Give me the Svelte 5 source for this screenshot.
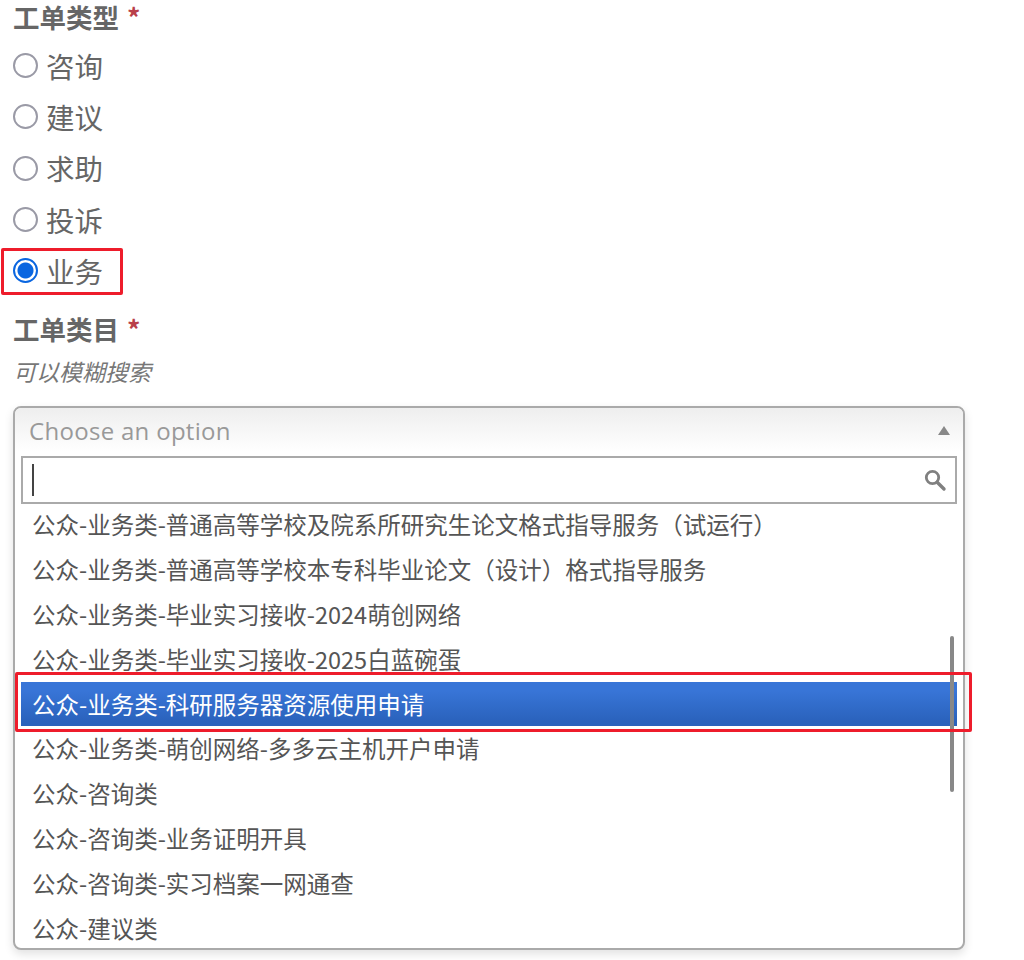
<script>
  const radios = [
    { label: '咨询', checked: false },
    { label: '建议', checked: false },
    { label: '求助', checked: false },
    { label: '投诉', checked: false },
    { label: '业务', checked: true }
  ];
  const options = [
    '公众-业务类-普通高等学校及院系所研究生论文格式指导服务（试运行）',
    '公众-业务类-普通高等学校本专科毕业论文（设计）格式指导服务',
    '公众-业务类-毕业实习接收-2024萌创网络',
    '公众-业务类-毕业实习接收-2025白蓝碗蛋',
    '公众-业务类-科研服务器资源使用申请',
    '公众-业务类-萌创网络-多多云主机开户申请',
    '公众-咨询类',
    '公众-咨询类-业务证明开具',
    '公众-咨询类-实习档案一网通查',
    '公众-建议类'
  ];
  const selected = 4;
</script>

<div class="page">
  <div class="label">工单类型 <span class="req">*</span></div>
  <div class="radios">
    {#each radios as r}
      <div class="radio-row" class:marked={r.checked}>
        <span class="radio" class:on={r.checked}></span>
        <span class="radio-text">{r.label}</span>
      </div>
    {/each}
  </div>

  <div class="label second">工单类目 <span class="req">*</span></div>
  <div class="hint">可以模糊搜索</div>

  <div class="select">
    <div class="head">
      <span class="placeholder">Choose an option</span>
      <span class="arrow"></span>
    </div>
    <div class="drop">
      <div class="search">
        <span class="caret"></span>
        <svg class="glass" width="24" height="24" viewBox="0 0 24 24" aria-hidden="true">
          <circle cx="9.5" cy="9.5" r="6.2" fill="none" stroke="#808080" stroke-width="2.8"/>
          <path d="M14.2 14.2 L21 21" stroke="#808080" stroke-width="3.4" stroke-linecap="round"/>
        </svg>
      </div>
      <div class="list">
        {#each options as o, i}
          <div class="opt" class:sel={i === selected}>{o}</div>
        {/each}
        <span class="thumb"></span>
      </div>
    </div>
    <span class="mark"></span>
  </div>
</div>

<style>
  :global(body) {
    margin: 0;
    background: #fff;
  }
  .page {
    width: 1024px;
    height: 960px;
    overflow: hidden;
    box-sizing: border-box;
    padding-left: 13px;
    color: #666;
    font-family: "Noto Sans CJK SC", "Inter", sans-serif;
  }
  .label {
    font-size: 26.5px;
    font-weight: 700;
    line-height: 34px;
    color: #666;
  }
  .req {
    color: #b9404a;
    margin-left: 2px;
  }
  .radios {
    margin-top: 6px;
    display: flex;
    flex-direction: column;
  }
  .radio-row {
    height: 51.3px;
    display: flex;
    align-items: center;
    gap: 8px;
    position: relative;
  }
  .radio-row.marked::after {
    content: "";
    position: absolute;
    left: -12px;
    top: 3px;
    width: 116px;
    height: 41px;
    border: 3px solid #ee1c2b;
    border-radius: 2px;
  }
  .radio {
    width: 25px;
    height: 25px;
    box-sizing: border-box;
    border: 2px solid #9a9aa6;
    border-radius: 50%;
    background: #fff;
  }
  .radio.on {
    border-color: #0a66e0;
    background: radial-gradient(circle, #0a66e0 0 7.5px, #fff 8.5px);
  }
  .radio-text {
    font-size: 28.5px;
    line-height: 40px;
    color: #666;
  }
  .second {
    margin-top: 16px;
  }
  .hint {
    margin-top: 8px;
    font-size: 23px;
    line-height: 34px;
    font-style: italic;
    color: #777;
  }
  .select {
    position: relative;
    margin-top: 18px;
    width: 952px;
    height: 544px;
    box-sizing: border-box;
    border: 2px solid #aaa;
    border-radius: 8px;
    box-shadow: 0 4px 10px rgba(0, 0, 0, 0.12);
    background: #fff;
  }
  .head {
    height: 44px;
    padding: 0 14px;
    display: flex;
    align-items: center;
    justify-content: space-between;
    background: linear-gradient(#eee, #fff);
    border-radius: 6px 6px 0 0;
  }
  .placeholder {
    font-family: "Open Sans", sans-serif;
    font-size: 24px;
    color: #999;
    letter-spacing: 0.3px;
  }
  .arrow {
    width: 0;
    height: 0;
    margin-right: -1px;
    border-left: 6px solid transparent;
    border-right: 6px solid transparent;
    border-bottom: 9px solid #888;
  }
  .drop {
    padding: 4px 6px 0;
  }
  .search {
    height: 48px;
    box-sizing: border-box;
    border: 2px solid #aaa;
    display: flex;
    align-items: center;
    justify-content: space-between;
    padding: 0 8px 0 9px;
  }
  .caret {
    width: 2px;
    height: 32px;
    background: #444;
  }
  .list {
    position: relative;
    height: 442px;
    overflow: hidden;
  }
  .opt {
    height: 44.8px;
    line-height: 44.8px;
    padding-left: 11px;
    font-size: 23.5px;
    color: #555;
    white-space: nowrap;
  }
  .opt:first-child {
    margin-top: -2px;
  }
  .opt.sel {
    color: #fff;
    background: linear-gradient(#3875d7 20%, #2a62bc 90%);
  }
  .thumb {
    position: absolute;
    right: 3px;
    top: 132px;
    width: 4px;
    height: 156px;
    border-radius: 2px;
    background: #888;
  }
  .mark {
    position: absolute;
    left: 0;
    top: 264px;
    width: 957px;
    height: 60px;
    box-sizing: border-box;
    border: 3px solid #ee1c2b;
    border-radius: 2px;
    margin-left: 0;
    pointer-events: none;
  }
</style>
